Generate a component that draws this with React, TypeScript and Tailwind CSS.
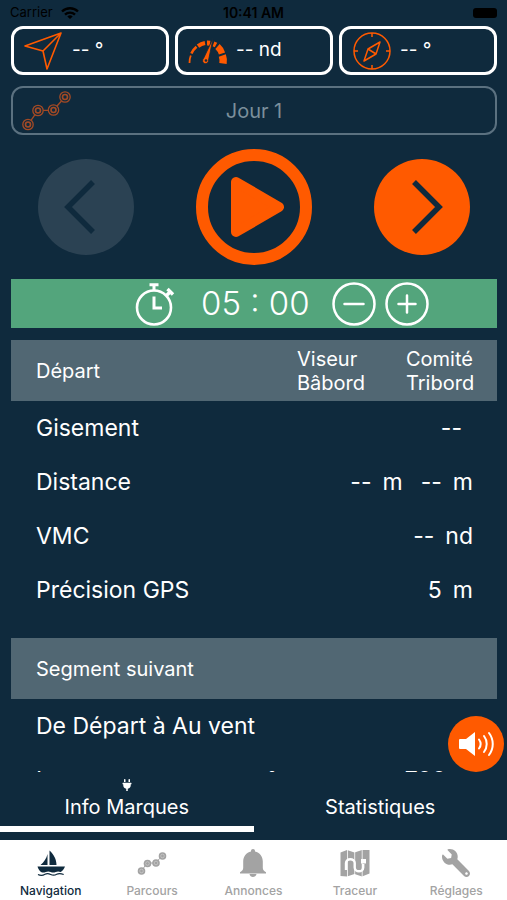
import { useState } from 'react';
import type { ReactNode } from 'react';
import { FaPlug, FaWrench } from 'react-icons/fa';

const HeadingIcon = () => (
  <svg className="w-10 h-10" viewBox="0 0 40 40" fill="none" stroke="currentColor" strokeWidth="1.6" strokeLinejoin="round">
    <path d="M37 2L1 15l18 5 4 18L37 2zM19 20L37 2" />
  </svg>
);

const GaugeIcon = () => (
  <svg className="w-10 h-10" viewBox="0 0 40 40" fill="none" stroke="currentColor">
    <path d="M1.500 32A18 18 0 0 1 2.800 24.500" strokeWidth="1.800" />
    <path d="M3.400 22.500A18 18 0 0 1 8.500 15.700" strokeWidth="2.600" />
    <path d="M10 15.200A17 17 0 0 1 17 12" strokeWidth="4" />
    <path d="M19 12A16 16 0 0 1 22 12.200M25.500 12.800A16 16 0 0 1 28 14" strokeWidth="5" />
    <path d="M29.500 15.500A16 16 0 0 1 34 22.500" strokeWidth="6.500" />
    <path d="M34.300 24.500A16 16 0 0 1 35 32.500" strokeWidth="7.500" />
    <path d="M25 7.500L15.500 27.500a3 3 0 1 0 5 1.800z" fill="currentColor" stroke="#0f2a3d" strokeWidth=".8" />
    <circle cx="18" cy="29.500" r="1.300" className="fill-[#0f2a3d]" stroke="none" />
  </svg>
);

const CompassIcon = () => (
  <svg className="w-10 h-10" viewBox="0 0 40 40" fill="none" stroke="currentColor" strokeWidth="1.500" strokeLinejoin="round">
    <circle cx="20" cy="20" r="18" />
    <path d="M20 2v4M20 34v4M2 20h4M34 20h4M28 11l-4 12-12 7 4-12zM16 18l8 5" />
  </svg>
);

const RouteIcon = ({ className }: { className: string }) => (
  <svg className={className} viewBox="0 0 50 44" fill="none" stroke="currentColor" strokeWidth="1.300">
    {[[6, 36.500], [16, 22.500], [31.500, 22], [43, 9]].map(([x, y]) => (
      <g key={x}>
        <circle cx={x} cy={y} r="5.200" />
        <circle cx={x} cy={y} r="2.500" strokeWidth="1.600" />
      </g>
    ))}
    <path d="M9 32.300l4-5.600M21.200 22.300h5M35 18l4.500-5" />
  </svg>
);

const RouteSolidIcon = () => (
  <svg className="w-[30px] h-7" viewBox="0 0 30 28" stroke="currentColor" fill="currentColor">
    <path d="M4.500 22L10 14H18L25.500 7" fill="none" strokeWidth="1" />
    {[[4.500, 22], [10.500, 14.500], [19, 14], [25.500, 7]].map(([x, y]) => (
      <g key={x}>
        <circle cx={x} cy={y} r="3.800" stroke="none" />
        <circle cx={x} cy={y} r="1.800" className="stroke-white/50" fill="none" strokeWidth=".6" />
      </g>
    ))}
  </svg>
);

const StopwatchIcon = () => (
  <svg className="w-10 h-11" viewBox="0 0 40 44" fill="none" stroke="currentColor" strokeWidth="2.600">
    <circle cx="19" cy="25.500" r="17" />
    <path d="M14.500 2.800h9M19 3v6" strokeWidth="3" />
    <path d="M32.500 7l5.500 5.500M34.500 10.500l-3.500 3.500" strokeWidth="3.400" />
    <path d="M19 14.500V26h8" strokeWidth="3" />
  </svg>
);

const SpeakerIcon = () => (
  <svg className="w-9 h-7" viewBox="0 0 36 28" fill="none" stroke="currentColor" strokeLinecap="round">
    <path d="M2 9h6l9-7v24l-9-7H2a1 1 0 0 1-1-1v-8a1 1 0 0 1 1-1z" fill="currentColor" stroke="none" />
    <path d="M21 9.500c2 2.700 2 6.300 0 9M26 6c3.600 4.700 3.600 11.300 0 16M31 3c5 6.500 5 15.500 0 22" strokeWidth="2" />
  </svg>
);

const SailboatIcon = () => (
  <svg className="w-[30px] h-7" viewBox="0 0 30 28" fill="currentColor">
    <path d="M13.500 1.500c4.500 4 7 9 7 14.500h-7zM11.500 5v11H4.500C8 13 10.500 9.500 11.500 5z" />
    <path d="M1.500 17.500h27.500c-1 2.500-2.300 4.400-4.300 5.500-2-.8-3.300-.8-5 0-1.800.8-3.300.8-5 0-1.700-.8-3.200-.8-5 0-1.500.7-2.700.8-4.200.3C3.500 22 2.200 20 1.500 17.500z" />
    <path d="M2 25.500c2.500 1.300 4.500 1.300 7-.2 2-1.200 3.800-.8 5.700.2 2 1 4 1 6-.2 2-1 4.300-.8 7 .2" fill="none" stroke="currentColor" strokeWidth="1.200" />
  </svg>
);

const BellIcon = () => (
  <svg className="w-7 h-7" viewBox="0 0 28 28" fill="currentColor">
    <path d="M14 0c1.200 0 2 .8 2 2v.5c4.700 1 7.800 5 7.800 10v6.300c0 2 1 3.400 3.200 4.400v1.300H1v-1.300c2.200-1 3.200-2.400 3.200-4.400v-6.300c0-5 3.100-9 7.800-10V2c0-1.200.8-2 2-2zM10.500 25h7c-.3 1.800-1.700 3-3.500 3s-3.200-1.200-3.500-3z" />
  </svg>
);

const MapIcon = () => (
  <svg className="w-[30px] h-7" viewBox="0 0 30 28" fill="none">
    <path d="M.500 3.500L7 1l7.500 2.500L22 1l7.500 0V24.500L22 27.500 14.500 25 7 27.500.500 27z" className="fill-current" />
    <path d="M7.500 0v28M14.700 2v24M22.200 0v28" stroke="white" strokeWidth=".8" />
    <path d="M6 21v-7c0-5 8.700-5 8.700 0v4.500c0 5 8.500 5 8.500 0V15" stroke="white" strokeWidth="2.400" />
    <path d="M21 10h5v4.500h-5z" fill="white" />
  </svg>
);

const Reading = ({ icon, value }: { icon: ReactNode; value: string }) => (
  <div className="flex-1 h-[49px] flex items-center gap-2 pl-[10px] border-[3px] border-white rounded-xl text-[#ff5a00]">
    {icon}
    <span className="text-[19px] text-white whitespace-pre">{value}</span>
  </div>
);

const startRows = [
  { label: 'Gisement', values: [['--', '']] },
  { label: 'Distance', values: [['--', 'm'], ['--', 'm']] },
  { label: 'VMC', values: [['--', 'nd']] },
  { label: 'Précision GPS', values: [['5', 'm']] },
];

const navItems = [
  { label: 'Navigation', icon: <SailboatIcon /> },
  { label: 'Parcours', icon: <RouteSolidIcon /> },
  { label: 'Annonces', icon: <BellIcon /> },
  { label: 'Traceur', icon: <MapIcon /> },
  { label: 'Réglages', icon: <FaWrench className="w-7 h-7 -scale-x-100" /> },
];

const App = () => {
  const [tab, setTab] = useState('marques');
  const [page, setPage] = useState('Navigation');
  const [minutes, setMinutes] = useState(5);

  return (
    <div className="h-screen flex flex-col bg-[#0f2a3d] text-white font-['Inter',sans-serif] overflow-hidden">
      {/* Status bar */}
      <header className="h-[26px] shrink-0 grid grid-cols-3 items-center px-[10px] text-[13px] text-black">
        <div className="flex items-center gap-2">
          Carrier
          <svg className="w-[18px] h-3" viewBox="0 0 18 12" fill="none" stroke="currentColor" strokeWidth="2.400">
            <path d="M1 4.500a11.500 11.500 0 0 1 16 0M4 7.600a7.200 7.200 0 0 1 10 0" />
            <path d="M9 12L6.300 9.400a4 4 0 0 1 5.400 0z" fill="currentColor" stroke="none" />
          </svg>
        </div>
        <span className="text-center text-sm font-semibold">10:41 AM</span>
        <div className="justify-self-end w-6 h-[10px] rounded-[3px] bg-black" />
      </header>

      <main className="relative flex-1 min-h-0">
        <div className="h-full overflow-hidden pl-[11px] pr-[10px]">
          <div className="flex gap-[6px]">
            <Reading icon={<HeadingIcon />} value="-- °" />
            <Reading icon={<GaugeIcon />} value="-- nd" />
            <Reading icon={<CompassIcon />} value="-- °" />
          </div>

          <button className="relative w-full h-[49px] mt-[11px] block border-2 border-[#5b7180] rounded-xl text-xl text-[#7b8f9b]">
            <span className="absolute left-[9px] top-0 text-[#a34a25]">
              <RouteIcon className="w-[50px] h-11" />
            </span>
            Jour 1
          </button>

          <div className="flex items-center justify-between px-[27px] mt-[14px]">
            <button aria-label="Précédent" disabled className="w-24 h-24 rounded-full bg-[#2b4253] text-[#0f2a3d]">
              <svg className="w-24 h-24" viewBox="0 0 96 96" fill="none" stroke="currentColor" strokeWidth="5.500">
                <path d="M55 23L30 48l25 25" />
              </svg>
            </button>
            <button aria-label="Démarrer" className="w-[116px] h-[116px] rounded-full border-[12px] border-[#ff5a00] text-[#ff5a00]">
              <svg className="w-full h-full" viewBox="0 0 92 92" fill="currentColor" stroke="currentColor" strokeWidth="10" strokeLinejoin="round">
                <path d="M28 21v50l43-25z" />
              </svg>
            </button>
            <button aria-label="Suivant" className="w-24 h-24 rounded-full bg-[#ff5a00] text-[#0f2a3d]">
              <svg className="w-24 h-24" viewBox="0 0 96 96" fill="none" stroke="currentColor" strokeWidth="5.500">
                <path d="M40 23l25 25-25 25" />
              </svg>
            </button>
          </div>

          {/* Countdown */}
          <div className="flex items-center h-[49px] mt-[14px] pl-[124px] bg-[#53a57c]">
            <StopwatchIcon />
            <span className="flex-none w-[106px] ml-[26px] text-center text-[33px] whitespace-nowrap font-light">
              {String(minutes).padStart(2, '0')} : 00
            </span>
            <div className="flex gap-[9px] ml-[25px]">
              <button aria-label="Moins" onClick={() => setMinutes((m) => Math.max(m - 1, 0))}>
                <svg className="w-11 h-11" viewBox="0 0 44 44" fill="none" stroke="currentColor" strokeWidth="2.500" strokeLinecap="round">
                  <circle cx="22" cy="22" r="20.500" />
                  <path d="M12.500 22h19" />
                </svg>
              </button>
              <button aria-label="Plus" onClick={() => setMinutes((m) => m + 1)}>
                <svg className="w-11 h-11" viewBox="0 0 44 44" fill="none" stroke="currentColor" strokeWidth="2.500" strokeLinecap="round">
                  <circle cx="22" cy="22" r="20.500" />
                  <path d="M13.500 22h17M22 13.500v17" />
                </svg>
              </button>
            </div>
          </div>

          <table className="w-full mt-3 text-left text-[23px]">
            <thead>
              <tr className="h-[61px] bg-[#516773] text-xl leading-6">
                <th className="pl-[25px] font-normal">Départ</th>
                <th className="w-[109px] font-normal">Viseur<br />Bâbord</th>
                <th className="w-[91px] font-normal">Comité<br />Tribord</th>
              </tr>
            </thead>
            <tbody>
              {startRows.map((row) => (
                <tr key={row.label} className="h-[54px]">
                  <th className="pl-[25px] font-normal">{row.label}</th>
                  <td colSpan={2} className="pr-6">
                    <div className="flex justify-end gap-[18px]">
                      {row.values.map(([value, unit], i) => (
                        <span key={i} className="flex gap-[11px]">
                          <span>{value}</span>
                          <span>{unit}</span>
                        </span>
                      ))}
                    </div>
                  </td>
                </tr>
              ))}
            </tbody>
          </table>

          <h2 className="flex items-center h-[61px] mt-[21px] pl-[25px] bg-[#516773] text-xl">Segment suivant</h2>
          <p className="flex items-center h-[54px] pl-[25px] text-[23px]">De Départ à Au vent</p>
          <div className="flex items-center h-[54px] pl-[25px] pr-6 text-[23px]">
            <span className="flex-1">Longueur</span>
            <span className="w-[138px]">°</span>
            <span>700 m</span>
          </div>
        </div>

        <button aria-label="Son" className="absolute right-[3px] bottom-0 w-14 h-14 flex items-center justify-center rounded-full bg-[#ff5a00]">
          <SpeakerIcon />
        </button>
      </main>

      {/* Tabs */}
      <div className="shrink-0 grid grid-cols-2 h-[68px] pb-2 text-xl">
        <button
          onClick={() => setTab('marques')}
          className={`flex flex-col items-center pt-[7px] border-b-[6px] ${tab === 'marques' ? 'border-white' : 'border-transparent'}`}
        >
          <FaPlug className="w-3 h-3" />
          <span className="leading-8">Info Marques</span>
        </button>
        <button
          onClick={() => setTab('stats')}
          className={`flex flex-col items-center pt-[19px] border-b-[6px] ${tab === 'stats' ? 'border-white' : 'border-transparent'}`}
        >
          <span className="leading-8">Statistiques</span>
        </button>
      </div>

      <nav className="shrink-0 grid grid-cols-5 h-[60px] bg-white text-xs font-medium">
        {navItems.map((item) => (
          <button
            key={item.label}
            onClick={() => setPage(item.label)}
            className={`flex flex-col items-center gap-[6px] pt-[9px] ${page === item.label ? 'text-[#0f2a3d]' : 'text-[#a3a3a3]'}`}
          >
            {item.icon}
            <span>{item.label}</span>
          </button>
        ))}
      </nav>
    </div>
  );
};

export default App;
